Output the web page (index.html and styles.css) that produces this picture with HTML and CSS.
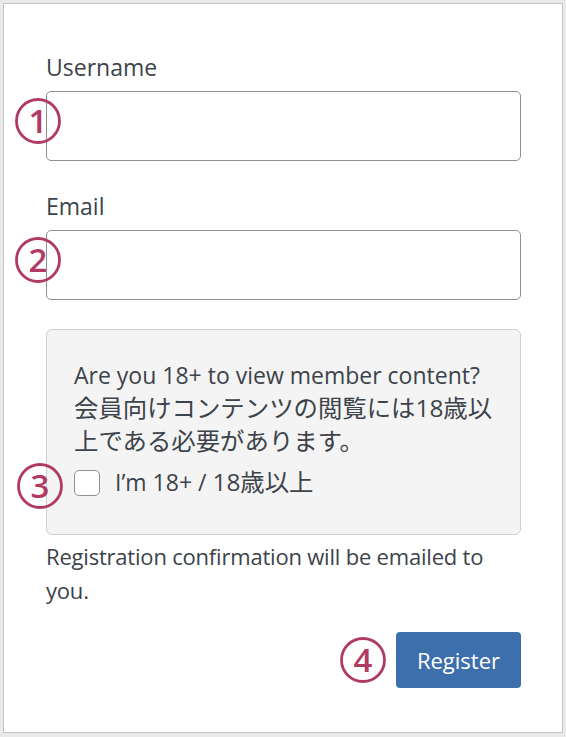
FILE: index.html
```html
<!DOCTYPE html>
<html lang="ja">
<head>
    <meta charset="UTF-8" />
    <meta name="viewport" content="width=device-width, initial-scale=1.0"/>
    <title>Register</title>
    <link rel="stylesheet" href="styles.css">
</head>
<body>
    <div class="card">
        <form class="register" onsubmit="return false;">
            <div class="field">
                <label for="user_login">Username</label>
                <div class="control">
                    <svg class="mark mark-input" viewBox="0 0 46 46" aria-hidden="true">
                        <circle cx="23" cy="23" r="21.5"/>
                        <text x="23" y="34.5" text-anchor="middle">1</text>
                    </svg>
                    <input type="text" id="user_login" name="user_login">
                </div>
            </div>

            <div class="field">
                <label for="user_email">Email</label>
                <div class="control">
                    <svg class="mark mark-input" viewBox="0 0 46 46" aria-hidden="true">
                        <circle cx="23" cy="23" r="21.5"/>
                        <text x="23" y="34.5" text-anchor="middle">2</text>
                    </svg>
                    <input type="email" id="user_email" name="user_email">
                </div>
            </div>

            <div class="age">
                <p>Are you 18+ to view member content?<br><span class="ja">会員向けコンテンツの閲覧には18歳以<br>上である必要があります。</span></p>
                <label class="check">
                    <svg class="mark mark-check" viewBox="0 0 46 46" aria-hidden="true">
                        <circle cx="23" cy="23" r="21.5"/>
                        <text x="23" y="34.5" text-anchor="middle">3</text>
                    </svg>
                    <input type="checkbox" name="age_ok">
                    <span>I’m 18+ / <span class="ja">18歳以上</span></span>
                </label>
            </div>

            <p class="note">Registration confirmation will be emailed to you.</p>

            <div class="actions">
                <svg class="mark" viewBox="0 0 46 46" aria-hidden="true">
                    <circle cx="23" cy="23" r="21.5"/>
                    <text x="23" y="34.5" text-anchor="middle">4</text>
                </svg>
                <button type="submit" class="btn">Register</button>
            </div>
        </form>
    </div>
</body>
</html>
```

FILE: styles.css
```css
body {
    margin: 0;
    background: #e9e9e9;
    font-family: "Open Sans", "Noto Sans CJK JP", sans-serif;
    color: #3c434a;
}

.card {
    margin: 3px;
    height: 730px;
    box-sizing: border-box;
    border: 1px solid #c6c6c6;
    background: #fff;
    padding: 47px 41px 0 42px;
}

.register {
    display: flex;
    flex-direction: column;
    gap: 29px;
}

/* fields */
.field label {
    display: block;
    font-size: 23px;
    line-height: 32px;
    margin-bottom: 8px;
}

.control {
    position: relative;
}

.control input {
    display: block;
    width: 100%;
    height: 70px;
    box-sizing: border-box;
    margin: 0;
    border: 1px solid #8c8f94;
    border-radius: 5px;
    background: #fff;
    font: inherit;
    padding: 0 12px;
}

/* circled markers */
.mark {
    width: 46px;
    height: 46px;
    flex-shrink: 0;
    overflow: visible;
}

.mark circle {
    fill: none;
    stroke: #b03a63;
    stroke-width: 2.8;
}

.mark text {
    fill: #b03a63;
    font-family: "Open Sans", sans-serif;
    font-size: 33px;
    font-weight: 600;
}

.mark-input {
    position: absolute;
    left: -31px;
    top: 7px;
}

.mark-check {
    position: absolute;
    left: -57px;
    top: -3px;
}

/* age box */
.age {
    border: 1px solid #cfcfcf;
    border-radius: 6px;
    background: #f4f4f4;
    padding: 29px 27px 35px;
    font-size: 23px;
    line-height: 33px;
}

.age p {
    margin: 0 0 8px;
}

.ja {
    font-size: 24.4px;
    line-height: 1;
}

.check {
    position: relative;
    display: flex;
    align-items: center;
    gap: 15px;
}

.check input {
    appearance: none;
    margin: 0;
    width: 26px;
    height: 26px;
    border: 1px solid #8c8f94;
    border-radius: 5px;
    background: #fff;
}

.note {
    margin: -25px 0 0;
    font-size: 22px;
    letter-spacing: -0.2px;
    line-height: 34px;
}

.actions {
    display: flex;
    justify-content: flex-end;
    align-items: center;
    gap: 10px;
    margin-top: -4px;
}

.btn {
    width: 125px;
    height: 56px;
    border: none;
    border-radius: 4px;
    background: #3d6fad;
    color: #fff;
    font-family: "Open Sans", sans-serif;
    font-size: 22px;
    cursor: pointer;
}
```
